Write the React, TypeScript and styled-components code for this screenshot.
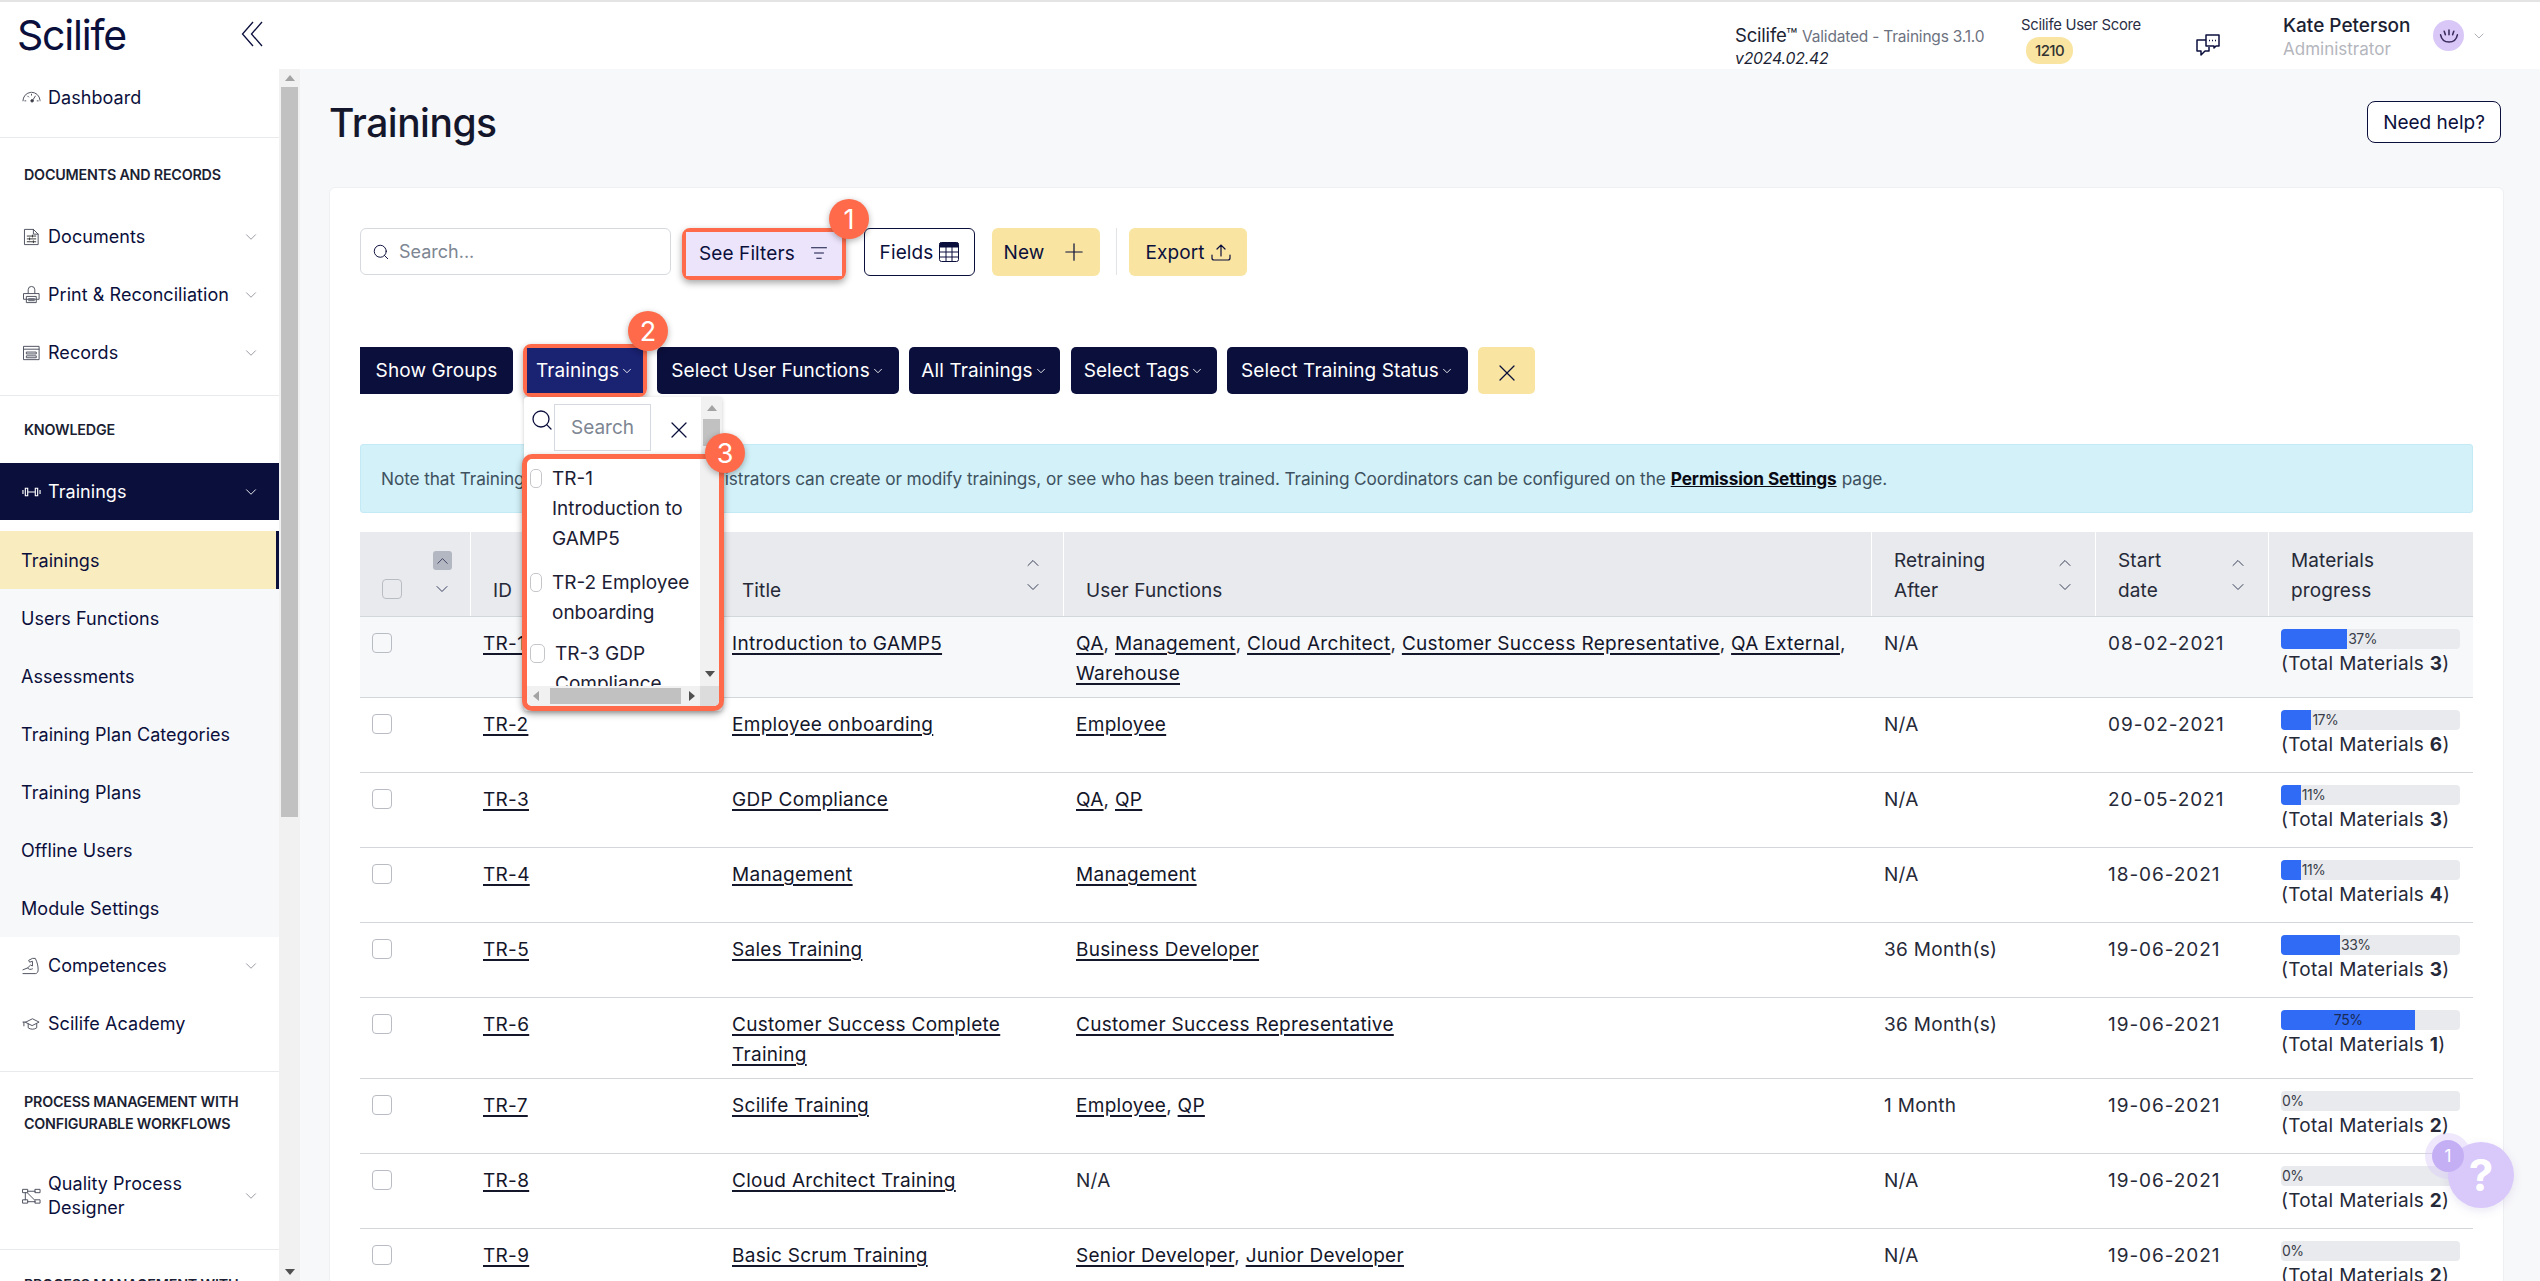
import React from "react";
import styled, { createGlobalStyle } from "styled-components";
import { Search, X, Plus, ChevronDown, ChevronUp, ListFilter } from "lucide-react";

const NAVY = "#0b0f3c";
const ORANGE = "#ff6b4a";
const YELLOW = "#f9e5a1";
const FONT = `Inter, "Liberation Sans", sans-serif`;

const Global = createGlobalStyle`
  * { box-sizing: border-box; }
  html, body { margin: 0; padding: 0; height: 100%; overflow: hidden; background: #f7f8fa; }
  body { font-family: ${FONT}; color: ${NAVY}; }
`;

const Page = styled.div`
  height: 1281px;
  display: flex;
  flex-direction: column;
  position: relative;
  overflow: hidden;
`;
const TopBar = styled.header`
  height: 69px;
  flex: none;
  display: flex;
  align-items: center;
  background: #fff;
  border-top: 2px solid #e4e4e4;
`;
const LogoArea = styled.div`
  width: 279px;
  display: flex;
  align-items: center;
  justify-content: space-between;
  padding: 0 16px 2px 17px;
`;
const Logo = styled.div`
  font-size: 41px;
  font-weight: 400;
  letter-spacing: -1.2px;
  color: ${NAVY};
  line-height: 44px;
`;
const Collapse = styled.span`
  display: flex;
  color: ${NAVY};
  margin-top: -2px;
`;
const TopRight = styled.div`
  margin-left: auto;
  display: flex;
  align-items: center;
  height: 100%;
`;
const VersionBlock = styled.div`
  width: 286px;
  margin-top: 21px;
  font-size: 18.5px;
  line-height: 22px;
  color: #1c1f33;
  letter-spacing: -0.2px;
`;
const VersionMuted = styled.span`
  font-size: 15.5px;
  color: #6d7280;
  letter-spacing: -0.2px;
`;
const VersionNum = styled.div`
  font-style: italic;
  font-size: 15.8px;
  line-height: 21px;
`;
const ScoreBlock = styled.div`
  width: 168px;
  display: flex;
  flex-direction: column;
  align-items: flex-start;
  gap: 3px;
  margin-top: 8px;
`;
const ScoreLabel = styled.div`
  font-size: 14.8px;
  line-height: 18px;
  color: #2b2e45;
  letter-spacing: -0.25px;
`;
const ScoreBadge = styled.div`
  margin-left: 5px;
  width: 47px;
  height: 27px;
  border-radius: 13px;
  background: ${YELLOW};
  font-size: 15px;
  font-weight: 500;
  letter-spacing: -0.6px;
  color: #333;
  display: flex;
  align-items: center;
  justify-content: center;
`;
const ChatSlot = styled.div`
  width: 94px;
  margin-top: 18px;
  display: flex;
  color: ${NAVY};
  padding-left: 6px;
`;
const UserBlock = styled.div`
  width: 150px;
  margin-top: 2px;
`;
const UserName = styled.div`
  font-size: 19px;
  font-weight: 500;
  line-height: 24px;
  color: #1c1f33;
`;
const UserRole = styled.div`
  font-size: 17px;
  line-height: 22px;
  color: #b4b6bd;
`;
const AvatarCircle = styled.div`
  width: 31px;
  height: 31px;
  border-radius: 50%;
  background: #d9c8f7;
  display: flex;
  align-items: center;
  justify-content: center;
`;
const UserChevron = styled.span`
  display: flex;
  color: #9a9ca6;
  margin: 0 53px 0 7px;
`;

const Body = styled.div`
  flex: 1;
  display: flex;
  min-height: 0;
`;
const Side = styled.aside`
  width: 279px;
  flex: none;
  background: #fff;
  overflow: hidden;
`;
const Section = styled.section<{ $pad?: number }>`
  padding-bottom: ${(p) => p.$pad ?? 0}px;
  border-bottom: 1px solid #e9eaec;
`;
const SectionHead = styled.div<{ $top: number; $bottom: number }>`
  padding: ${(p) => p.$top}px 0 ${(p) => p.$bottom}px 24px;
  font-size: 14.3px;
  line-height: 22px;
  font-weight: 600;
  letter-spacing: -0.2px;
  color: #1c1f33;
  white-space: nowrap;
`;
const NavRow = styled.div<{ $active?: boolean }>`
  height: ${(p) => (p.$active ? 57 : 58)}px;
  display: flex;
  align-items: center;
  padding: 0 19px 0 22px;
  gap: 7px;
  font-size: 18px;
  line-height: 24px;
  letter-spacing: 0.05px;
  color: ${(p) => (p.$active ? "#fff" : NAVY)};
  background: ${(p) => (p.$active ? NAVY : "transparent")};
`;
const NavIcon = styled.span`
  width: 19px;
  height: 20px;
  flex: none;
  display: flex;
  align-items: center;
  justify-content: center;
`;
const NavLabel = styled.span`
  flex: 1;
`;
const NavChevron = styled.span<{ $light?: boolean }>`
  display: flex;
  flex: none;
  color: ${(p) => (p.$light ? "#fff" : "#8f919b")};
`;
const SubList = styled.div`
  margin-top: 11px;
  background: #f7f8fa;
`;
const SubItem = styled.div<{ $on?: boolean }>`
  height: 58px;
  display: flex;
  align-items: center;
  padding-left: 21px;
  font-size: 18px;
  letter-spacing: 0.05px;
  color: ${NAVY};
  background: ${(p) => (p.$on ? "#f9ecbf" : "transparent")};
  border-right: ${(p) => (p.$on ? `3px solid ${NAVY}` : "none")};
`;
const SideBar = styled.div`
  width: 21px;
  flex: none;
  background: #f1f1f1;
  display: flex;
  flex-direction: column;
  align-items: center;
  padding: 0 2px;
`;
const ArrowCell = styled.div<{ $h?: number }>`
  height: ${(p) => p.$h ?? 18}px;
  flex: none;
  display: flex;
  align-items: center;
  justify-content: center;
`;
const Arrow = styled.i<{ $dir: "up" | "down" | "left" | "right" }>`
  display: block;
  width: 0;
  height: 0;
  border: 5px solid transparent;
  ${(p) =>
    p.$dir === "up"
      ? "border-top: 0; border-bottom: 6px solid #a3a3a3;"
      : p.$dir === "down"
      ? "border-bottom: 0; border-top: 6px solid #505050;"
      : p.$dir === "left"
      ? "border-left: 0; border-right: 6px solid #a3a3a3;"
      : "border-right: 0; border-left: 6px solid #505050;"}
`;
const Thumb = styled.div<{ $h: number }>`
  height: ${(p) => p.$h}px;
  width: 100%;
  flex: none;
  background: #c1c1c1;
`;
const Grow = styled.div`
  flex: 1;
`;

const Main = styled.main`
  flex: 1;
  min-width: 0;
  padding: 32px 36px 0 29px;
  overflow: hidden;
`;
const TitleRow = styled.div`
  display: flex;
  align-items: center;
  justify-content: space-between;
  height: 42px;
  margin-bottom: 44px;
  padding-right: 3px;
`;
const PageTitle = styled.h1`
  margin: 0;
  font-size: 39px;
  font-weight: 500;
  letter-spacing: -0.5px;
  color: #14172c;
`;
const HelpButton = styled.button`
  width: 134px;
  height: 42px;
  background: #fff;
  border: 1.5px solid ${NAVY};
  border-radius: 8px;
  font: 400 19px ${FONT};
  letter-spacing: 0;
  color: ${NAVY};
`;
const Card = styled.div`
  background: #fff;
  border: 1px solid #eef0f2;
  border-radius: 6px;
  padding: 40px 30px 0 30px;
  height: 1100px;
`;
const Toolbar = styled.div`
  display: flex;
  align-items: flex-start;
  height: 119px;
`;
const SearchField = styled.div`
  width: 311px;
  height: 47px;
  margin-right: 11px;
  border: 1.5px solid #d6d9dd;
  border-radius: 6px;
  display: flex;
  align-items: center;
  gap: 9px;
  padding-left: 11px;
  font-size: 18px;
  color: #7d8692;
`;
const Highlight = styled.div`
  position: relative;
  border: 4px solid ${ORANGE};
  border-radius: 8px;
  box-shadow: 0 3px 7px rgba(0, 0, 0, 0.35);
`;
const FilterInner = styled.div`
  width: 156px;
  height: 44px;
  background: #ece4fb;
  display: flex;
  align-items: center;
  justify-content: space-between;
  padding: 0 14px 2px 13px;
  font-size: 19px;
  letter-spacing: 0.1px;
  color: ${NAVY};
`;
const ToolButton = styled.div<{ $fill?: boolean; $w: number }>`
  width: ${(p) => p.$w}px;
  height: 48px;
  display: flex;
  align-items: center;
  justify-content: center;
  gap: 6px;
  border-radius: 6px;
  font-size: 19px;
  letter-spacing: 0.1px;
  color: ${NAVY};
  background: ${(p) => (p.$fill ? YELLOW : "#fff")};
  border: ${(p) => (p.$fill ? "none" : `1.5px solid ${NAVY}`)};
`;
const ToolDivider = styled.div`
  width: 1px;
  height: 47px;
  background: #e2e3e5;
  margin: 0 12px 0 16px;
`;
const Gap = styled.div<{ $w: number }>`
  width: ${(p) => p.$w}px;
  flex: none;
`;
const Badge = styled.div<{ $x: number; $y: number }>`
  position: absolute;
  left: ${(p) => p.$x}px;
  top: ${(p) => p.$y}px;
  width: 40px;
  height: 40px;
  border-radius: 50%;
  background: ${ORANGE};
  color: #fff;
  font-size: 27px;
  font-weight: 400;
  display: flex;
  align-items: center;
  justify-content: center;
  box-shadow: 0 2px 6px rgba(0, 0, 0, 0.3);
  z-index: 5;
`;
const FilterRow = styled.div`
  display: flex;
  align-items: center;
  height: 47px;
  margin-bottom: 50px;
  position: relative;
`;
const DarkButton = styled.div<{ $w: number; $flatLeft?: boolean }>`
  width: ${(p) => p.$w}px;
  height: 47px;
  flex: none;
  background: ${NAVY};
  color: #fff;
  border-radius: ${(p) => (p.$flatLeft ? "0 5px 5px 0" : "5px")};
  font-size: 19px;
  letter-spacing: 0.1px;
  display: flex;
  align-items: center;
  justify-content: center;
  gap: 1px;
`;
const TrainingsInner = styled.div`
  width: 116px;
  height: 45px;
  background: #1a2272;
  color: #fff;
  font-size: 19px;
  letter-spacing: 0.1px;
  display: flex;
  align-items: center;
  justify-content: center;
  gap: 1px;
`;
const ClearButton = styled.div`
  width: 57px;
  height: 47px;
  background: ${YELLOW};
  border-radius: 5px;
  color: ${NAVY};
  display: flex;
  align-items: center;
  justify-content: center;
  padding-top: 4px;
`;
const DropWrap = styled.div`
  position: relative;
  flex: none;
  margin: 0 10px 0 10px;
`;
const Dropdown = styled.div`
  position: absolute;
  left: 1px;
  top: 53px;
  width: 198px;
  background: #fff;
  box-shadow: 0 1px 4px rgba(0, 0, 0, 0.2);
  z-index: 4;
  border-radius: 3px;
`;
const DropHead = styled.div`
  height: 57px;
  display: flex;
`;
const DropIcon = styled.span`
  width: 30px;
  display: flex;
  justify-content: center;
  padding: 11px 0 0 6px;
  color: ${NAVY};
`;
const DropSearch = styled.div`
  width: 97px;
  height: 47px;
  margin-top: 7px;
  border: 1px solid #d5dae0;
  display: flex;
  align-items: center;
  padding-left: 16px;
  font-size: 19px;
  color: #7d8692;
`;
const DropClose = styled.span`
  flex: 1;
  display: flex;
  justify-content: center;
  padding: 19px 0 0 6px;
  color: ${NAVY};
`;
const MiniBar = styled.div`
  width: 21px;
  background: #f1f1f1;
  padding: 0 2px;
  display: flex;
  flex-direction: column;
`;
const ListFrame = styled.div`
  position: relative;
  margin: 0 -2px;
  height: 257px;
  border: 5px solid ${ORANGE};
  border-radius: 10px;
  box-shadow: 0 3px 7px rgba(0, 0, 0, 0.35);
  background: #fff;
  display: grid;
  grid-template-columns: 173px 19px;
  grid-template-rows: 227px 20px;
`;
const ListBody = styled.div`
  padding: 5px 0 0 3px;
  overflow: hidden;
  min-width: 0;
  border-radius: 5px 0 0 0;
`;
const ListItem = styled.div<{ $h: number; $wide?: boolean }>`
  height: ${(p) => p.$h}px;
  display: flex;
  gap: 10px;
  font-size: 19px;
  line-height: 30px;
  color: #1c2034;
`;
const ListCheck = styled.span<{ $wide?: boolean }>`
  width: ${(p) => (p.$wide ? 15 : 12)}px;
  height: 19px;
  flex: none;
  margin-top: 5px;
  border: 1px solid #c4c6ca;
  border-radius: 5px;
  background: #fff;
`;
const ListText = styled.span`
  min-width: 0;
`;
const ListBarV = styled.div`
  background: #f1f1f1;
  display: flex;
  flex-direction: column;
  justify-content: flex-end;
  align-items: center;
  padding-bottom: 9px;
  border-radius: 0 5px 0 0;
`;
const ListBarH = styled.div`
  background: #f1f1f1;
  display: flex;
  align-items: center;
  border-radius: 0 0 0 5px;
`;
const HThumb = styled.div`
  width: 131px;
  height: 16px;
  background: #c1c1c1;
  margin: 0 8px 0 5px;
`;
const HLeft = styled.div`
  width: 18px;
  display: flex;
  justify-content: center;
`;
const Corner = styled.div`
  background: #dcdcdc;
  border-radius: 0 0 5px 0;
`;

const Notice = styled.div`
  height: 69px;
  display: flex;
  align-items: center;
  padding-left: 20px;
  background: #d3f1f9;
  border: 1px solid #c3eaf5;
  border-radius: 3px;
  font-size: 17.26px;
  letter-spacing: -0.1px;
  color: #3e5260;
  margin-bottom: 19px;
`;
const NoticeLink = styled.a`
  font-weight: 700;
  color: #0a0a14;
  text-decoration: underline;
  margin: 0 5px;
`;

const COLS = "110px 249px 344px 808px 224px 173px 206px";
const HeaderRow = styled.div`
  display: grid;
  grid-template-columns: ${COLS};
  height: 85px;
  background: #e8eaed;
  border-bottom: 1.5px solid #d3d6db;
`;
const HeaderCell = styled.div`
  display: flex;
  align-items: flex-end;
  padding: 0 20px 10.5px 22px;
  border-left: 1.5px solid #fff;
  font-size: 19px;
  line-height: 30px;
  letter-spacing: 0.1px;
  color: #262938;
`;
const CheckHeader = styled.div`
  display: flex;
  align-items: flex-end;
  padding: 0 0 17px 22px;
  gap: 30px;
`;
const Check = styled.span`
  display: block;
  width: 20px;
  height: 20px;
  flex: none;
  border: 1px solid #b9bcc3;
  border-radius: 4px;
  background: transparent;
`;
const HeadLabel = styled.span`
  flex: 1;
`;
const SortStack = styled.div`
  display: flex;
  flex-direction: column;
  gap: 4px;
  margin-bottom: 8.5px;
  color: #3b3f58;
`;
const SortFirst = styled.div`
  display: flex;
  flex-direction: column;
  align-items: center;
  color: #3b3f60;
`;
const SortOn = styled.span`
  width: 19px;
  height: 19px;
  background: #b3b7c1;
  border-radius: 3px;
  display: flex;
  align-items: center;
  justify-content: center;
  margin-bottom: 9px;
`;
const Row = styled.div<{ $hover?: boolean }>`
  display: grid;
  grid-template-columns: ${COLS};
  padding: 12px 0 8px;
  border-bottom: 1.5px solid #d3d6db;
  background: ${(p) => (p.$hover ? "#f7f8fa" : "#fff")};
  font-size: 19px;
  line-height: 30px;
  letter-spacing: 0.3px;
  color: #262938;
`;
const CheckCell = styled.div`
  padding: 4px 0 0 12px;
`;
const Cell = styled.div`
  padding: 0 13px;
`;
const DateCell = styled(Cell)`
  letter-spacing: 0.95px;
`;
const Link = styled.a`
  color: #14162a;
  text-decoration: underline;
  text-decoration-thickness: 1.5px;
  text-underline-offset: 3px;
`;
const ProgressCell = styled.div`
  padding-left: 13px;
  min-height: 54px;
`;
const Bar = styled.div`
  width: 179px;
  height: 20px;
  background: #e8eaed;
  border-radius: 4px;
  display: flex;
  overflow: hidden;
  font-size: 14px;
  line-height: 20px;
  letter-spacing: -0.5px;
  color: #3a3d4a;
`;
const Fill = styled.div<{ $v: number }>`
  width: ${(p) => p.$v}%;
  background: #2f6bf4;
  flex: none;
  text-align: center;
  color: #1b2a55;
`;
const BarLabel = styled.span`
  padding-left: 1px;
`;
const Total = styled.div`
  line-height: 30px;
  white-space: nowrap;
`;

const HelpBubble = styled.div`
  position: absolute;
  left: 2448px;
  top: 1142px;
  width: 66px;
  height: 66px;
  border-radius: 50%;
  background: #d9c8fa;
  color: #fff;
  font-size: 44px;
  font-weight: 700;
  display: flex;
  align-items: center;
  justify-content: center;
  box-shadow: 0 3px 10px rgba(120, 100, 180, 0.15);
  z-index: 6;
`;
const HelpCount = styled.div`
  position: absolute;
  left: 2432px;
  top: 1140px;
  width: 32px;
  height: 32px;
  border-radius: 50%;
  background: #c4aff5;
  box-shadow: 0 0 0 7px rgba(217, 200, 250, 0.42);
  color: #fff;
  font-size: 17px;
  display: flex;
  align-items: center;
  justify-content: center;
  z-index: 7;
`;

const I: React.FC<{ children: React.ReactNode; size?: number }> = ({ children, size = 20 }) => (
  <svg width={size} height={size} viewBox="0 0 20 20" fill="none" stroke="#4b4e5c" strokeWidth="1" strokeLinecap="round" strokeLinejoin="round">
    {children}
  </svg>
);

const icons: Record<string, React.ReactNode> = {
  dash: (
    <I>
      <path d="M1 13a9 9 0 0 1 18 0" strokeDasharray="6 1" />
      <path d="M3 13h1M16 13h1M10 6v1M6 8l1 1M14 8l-2.5 4" />
      <circle cx="10.6" cy="13" r="1.3" fill="#222" />
    </I>
  ),
  doc: (
    <I>
      <path d="M3 2h9l5 5v11H3zM12 2v5h5" />
      <path d="M5.5 9h9M5.5 12h9M5.5 15h9M11 8v2M8 11v2M12 14v2" stroke="#333" />
    </I>
  ),
  print: (
    <I>
      <path d="M6.5 8V4.5a3.5 3.5 0 0 1 7 0V8M2 8.5h16v6H2zM5 11.5h10v6.5H5z" />
      <path d="M7 14h6M7 16h6" />
    </I>
  ),
  rec: (
    <I>
      <path d="M2 3h16v14H2zM2 6h16" />
      <path d="M5 9h10v2H5zM5 13h10v2H5z" />
    </I>
  ),
  dumb: (
    <svg width="20" height="20" viewBox="0 0 20 20" fill="none" stroke="#fff" strokeWidth="1.2">
      <path d="M1 8v4M3.5 6v8h2.5V6zM6 10h8M14 6v8h2.5V6zM19 8v4" />
    </svg>
  ),
  muscle: (
    <I>
      <path d="M1 14l5-2 3-3 2 1V5l-3 1-1-2 4-2h3c2 4 3 8 3 12 0 2-1 4-3 4H1" />
      <path d="M6 12c1 2 3 2 5 1" />
    </I>
  ),
  academy: (
    <I>
      <path d="M4 8l7-3.5L18 8l-7 3.5zM6.5 10v4c2.5 2 6.5 2 9 0v-4M1 8h3M2 8v4" />
    </I>
  ),
  flow: (
    <I>
      <rect x="1" y="3" width="5" height="3.5" />
      <rect x="14" y="3" width="5" height="3.5" />
      <rect x="1" y="14" width="5" height="3.5" />
      <rect x="14" y="14" width="5" height="3.5" />
      <path d="M6 5h8M6 16h8M3.5 6.5V14M6 7l7 7" />
    </I>
  ),
};

const Down: React.FC<{ size?: number; weight?: number }> = ({ size = 14, weight = 1.2 }) => <ChevronDown size={size} strokeWidth={weight} />;
const Up: React.FC<{ size?: number }> = ({ size = 14 }) => <ChevronUp size={size} strokeWidth={1.2} />;

const NavLine: React.FC<{ icon: string; label: React.ReactNode; more?: boolean; active?: boolean }> = ({ icon, label, more, active }) => (
  <NavRow $active={active}>
    <NavIcon>{icons[icon]}</NavIcon>
    <NavLabel>{label}</NavLabel>
    {more && (
      <NavChevron $light={active}>
        <Down size={18} />
      </NavChevron>
    )}
  </NavRow>
);

type R = { id: string; title: string; fns: string[]; after: string; date: string; pct: number; total: number };
const rows: R[] = [
  { id: "TR-1", title: "Introduction to GAMP5", fns: ["QA", "Management", "Cloud Architect", "Customer Success Representative", "QA External", "Warehouse"], after: "N/A", date: "08-02-2021", pct: 37, total: 3 },
  { id: "TR-2", title: "Employee onboarding", fns: ["Employee"], after: "N/A", date: "09-02-2021", pct: 17, total: 6 },
  { id: "TR-3", title: "GDP Compliance", fns: ["QA", "QP"], after: "N/A", date: "20-05-2021", pct: 11, total: 3 },
  { id: "TR-4", title: "Management", fns: ["Management"], after: "N/A", date: "18-06-2021", pct: 11, total: 4 },
  { id: "TR-5", title: "Sales Training", fns: ["Business Developer"], after: "36 Month(s)", date: "19-06-2021", pct: 33, total: 3 },
  { id: "TR-6", title: "Customer Success Complete Training", fns: ["Customer Success Representative"], after: "36 Month(s)", date: "19-06-2021", pct: 75, total: 1 },
  { id: "TR-7", title: "Scilife Training", fns: ["Employee", "QP"], after: "1 Month", date: "19-06-2021", pct: 0, total: 2 },
  { id: "TR-8", title: "Cloud Architect Training", fns: [], after: "N/A", date: "19-06-2021", pct: 0, total: 2 },
  { id: "TR-9", title: "Basic Scrum Training", fns: ["Senior Developer", "Junior Developer"], after: "N/A", date: "19-06-2021", pct: 0, total: 2 },
];

const Sort: React.FC = () => (
  <SortStack>
    <Up size={20} />
    <Down size={20} />
  </SortStack>
);

export default function App() {
  return (
    <Page>
      <Global />
      <TopBar>
        <LogoArea>
          <Logo>Scilife</Logo>
          <Collapse>
            <svg width="22" height="26" viewBox="0 0 22 26" fill="none" stroke="currentColor" strokeWidth="1.3">
              <path d="M12 1L1.5 13 12 25M21 1L10.5 13 21 25" />
            </svg>
          </Collapse>
        </LogoArea>
        <TopRight>
          <VersionBlock>
            Scilife™ <VersionMuted>Validated - Trainings 3.1.0</VersionMuted>
            <VersionNum>v2024.02.42</VersionNum>
          </VersionBlock>
          <ScoreBlock>
            <ScoreLabel>Scilife User Score</ScoreLabel>
            <ScoreBadge>1210</ScoreBadge>
          </ScoreBlock>
          <ChatSlot>
            <svg width="26" height="24" viewBox="0 0 26 24" fill="none" stroke="currentColor" strokeWidth="1.5" strokeLinejoin="round">
              <path d="M11 7H2v11h4v4l4-4h4v-4" />
              <path d="M11 2h13v11h-3l-2 2v-2h-8z" fill="#fff" />
              <path d="M14 7.5h1M17 7.5h1M20 7.5h1" />
            </svg>
          </ChatSlot>
          <UserBlock>
            <UserName>Kate Peterson</UserName>
            <UserRole>Administrator</UserRole>
          </UserBlock>
          <AvatarCircle>
            <svg width="24" height="24" viewBox="0 0 20 20" fill="none" stroke="#3a2c5e" strokeWidth="1.3" strokeLinecap="round">
              <path d="M3 9c1 5 4 6 7 6s6-1 7-6" />
              <path d="M10 5v4M6 6l1 3M14 6l-1 3" />
            </svg>
          </AvatarCircle>
          <UserChevron>
            <Down size={16} />
          </UserChevron>
        </TopRight>
      </TopBar>
      <Body>
        <Side>
          <Section $pad={10}>
            <NavLine icon="dash" label="Dashboard" />
          </Section>
          <Section $pad={13}>
            <SectionHead $top={26} $bottom={22}>DOCUMENTS AND RECORDS</SectionHead>
            <NavLine icon="doc" label="Documents" more />
            <NavLine icon="print" label="Print & Reconciliation" more />
            <NavLine icon="rec" label="Records" more />
          </Section>
          <Section $pad={18}>
            <SectionHead $top={23} $bottom={22}>KNOWLEDGE</SectionHead>
            <NavLine icon="dumb" label="Trainings" more active />
            <SubList>
              <SubItem $on>Trainings</SubItem>
              <SubItem>Users Functions</SubItem>
              <SubItem>Assessments</SubItem>
              <SubItem>Training Plan Categories</SubItem>
              <SubItem>Training Plans</SubItem>
              <SubItem>Offline Users</SubItem>
              <SubItem>Module Settings</SubItem>
            </SubList>
            <NavLine icon="muscle" label="Competences" more />
            <NavLine icon="academy" label="Scilife Academy" />
          </Section>
          <Section $pad={24}>
            <SectionHead $top={19} $bottom={32}>
              PROCESS MANAGEMENT WITH
              <br />
              CONFIGURABLE WORKFLOWS
            </SectionHead>
            <NavLine icon="flow" label={<>Quality Process<br />Designer</>} more />
          </Section>
          <SectionHead $top={24} $bottom={0}>PROCESS MANAGEMENT WITH</SectionHead>
        </Side>
        <SideBar>
          <ArrowCell>
            <Arrow $dir="up" />
          </ArrowCell>
          <Thumb $h={730} />
          <Grow />
          <ArrowCell>
            <Arrow $dir="down" />
          </ArrowCell>
        </SideBar>
        <Main>
          <TitleRow>
            <PageTitle>Trainings</PageTitle>
            <HelpButton>Need help?</HelpButton>
          </TitleRow>
          <Card>
            <Toolbar>
              <SearchField>
                <Search size={18} strokeWidth={1.3} color={NAVY} />
                Search...
              </SearchField>
              <Highlight>
                <FilterInner>
                  See Filters
                  <ListFilter size={18} strokeWidth={1.3} />
                </FilterInner>
                <Badge $x={143} $y={-33}>1</Badge>
              </Highlight>
              <Gap $w={18} />
              <ToolButton $w={111}>
                Fields
                <svg width="20" height="20" viewBox="0 0 20 20" fill="none" stroke={NAVY} strokeWidth="1">
                  <rect x="0.5" y="0.5" width="19" height="19" rx="2" />
                  <path d="M1 1h18v4H1z" fill={NAVY} />
                  <path d="M7 5v14M13 5v14M1 10h18M1 15h18" />
                </svg>
              </ToolButton>
              <Gap $w={17} />
              <ToolButton $w={108} $fill>
                New
                <Gap $w={4} />
                <Plus size={28} strokeWidth={1.05} />
              </ToolButton>
              <ToolDivider />
              <ToolButton $w={118} $fill>
                Export
                <svg width="20" height="20" viewBox="0 0 20 20" fill="none" stroke={NAVY} strokeWidth="1.2" strokeLinecap="round">
                  <path d="M10 3v11M6 7l4-4 4 4M1 13v3a2 2 0 0 0 2 2h14a2 2 0 0 0 2-2v-3" />
                </svg>
              </ToolButton>
            </Toolbar>
            <FilterRow>
              <DarkButton $w={153} $flatLeft>Show Groups</DarkButton>
              <DropWrap>
                <Highlight>
                  <TrainingsInner>
                    Trainings
                    <Down size={14} weight={1.5} />
                  </TrainingsInner>
                  <Badge $x={101} $y={-37}>2</Badge>
                </Highlight>
                <Dropdown>
                  <DropHead>
                    <DropIcon>
                      <Search size={24} strokeWidth={1.3} />
                    </DropIcon>
                    <DropSearch>Search</DropSearch>
                    <DropClose>
                      <X size={28} strokeWidth={1.1} />
                    </DropClose>
                    <MiniBar>
                      <ArrowCell $h={22}>
                        <Arrow $dir="up" />
                      </ArrowCell>
                      <Thumb $h={27} />
                    </MiniBar>
                  </DropHead>
                  <ListFrame>
                    <ListBody>
                      <ListItem $h={104}>
                        <ListCheck />
                        <ListText>TR-1<br />Introduction to GAMP5</ListText>
                      </ListItem>
                      <ListItem $h={71}>
                        <ListCheck />
                        <ListText>TR-2 Employee onboarding</ListText>
                      </ListItem>
                      <ListItem $h={70} $wide>
                        <ListCheck $wide />
                        <ListText>TR-3 GDP Compliance</ListText>
                      </ListItem>
                    </ListBody>
                    <ListBarV>
                      <Arrow $dir="down" />
                    </ListBarV>
                    <ListBarH>
                      <HLeft>
                        <Arrow $dir="left" />
                      </HLeft>
                      <HThumb />
                      <Arrow $dir="right" />
                    </ListBarH>
                    <Corner />
                    <Badge $x={178} $y={-26}>3</Badge>
                  </ListFrame>
                </Dropdown>
              </DropWrap>
              <DarkButton $w={242}>Select User Functions<Down size={14} weight={1.5} /></DarkButton>
              <Gap $w={10} />
              <DarkButton $w={151}>All Trainings<Down size={14} weight={1.5} /></DarkButton>
              <Gap $w={11} />
              <DarkButton $w={146}>Select Tags<Down size={14} weight={1.5} /></DarkButton>
              <Gap $w={10} />
              <DarkButton $w={241}>Select Training Status<Down size={14} weight={1.5} /></DarkButton>
              <Gap $w={10} />
              <ClearButton>
                <X size={28} strokeWidth={1.1} />
              </ClearButton>
            </FilterRow>
            <Notice>
              Note that Training Coordinators and Administrators can create or modify trainings, or see who has been trained. Training Coordinators can be configured on the
              <NoticeLink>Permission Settings</NoticeLink>
              page.
            </Notice>
            <HeaderRow>
              <CheckHeader>
                <Check />
                <SortFirst>
                  <SortOn>
                    <Up size={20} />
                  </SortOn>
                  <Down size={20} />
                </SortFirst>
              </CheckHeader>
              <HeaderCell>ID</HeaderCell>
              <HeaderCell>
                <HeadLabel>Title</HeadLabel>
                <Sort />
              </HeaderCell>
              <HeaderCell>User Functions</HeaderCell>
              <HeaderCell>
                <HeadLabel>Retraining<br />After</HeadLabel>
                <Sort />
              </HeaderCell>
              <HeaderCell>
                <HeadLabel>Start<br />date</HeadLabel>
                <Sort />
              </HeaderCell>
              <HeaderCell>Materials<br />progress</HeaderCell>
            </HeaderRow>
            {rows.map((r, i) => (
              <Row key={r.id} $hover={i === 0}>
                <CheckCell>
                  <Check />
                </CheckCell>
                <Cell>
                  <Link>{r.id}</Link>
                </Cell>
                <Cell>
                  <Link>{r.title}</Link>
                </Cell>
                <Cell>
                  {r.fns.length === 0
                    ? "N/A"
                    : r.fns.map((f, j) => (
                        <React.Fragment key={f}>
                          <Link>{f}</Link>
                          {j < r.fns.length - 1 ? ", " : ""}
                        </React.Fragment>
                      ))}
                </Cell>
                <Cell>{r.after}</Cell>
                <DateCell>{r.date}</DateCell>
                <ProgressCell>
                  <Bar>
                    <Fill $v={r.pct}>{r.pct > 50 ? `${r.pct}%` : ""}</Fill>
                    {r.pct <= 50 && <BarLabel>{r.pct}%</BarLabel>}
                  </Bar>
                  <Total>
                    (Total Materials <b>{r.total}</b>)
                  </Total>
                </ProgressCell>
              </Row>
            ))}
          </Card>
        </Main>
      </Body>
      <HelpBubble>?</HelpBubble>
      <HelpCount>1</HelpCount>
    </Page>
  );
}
